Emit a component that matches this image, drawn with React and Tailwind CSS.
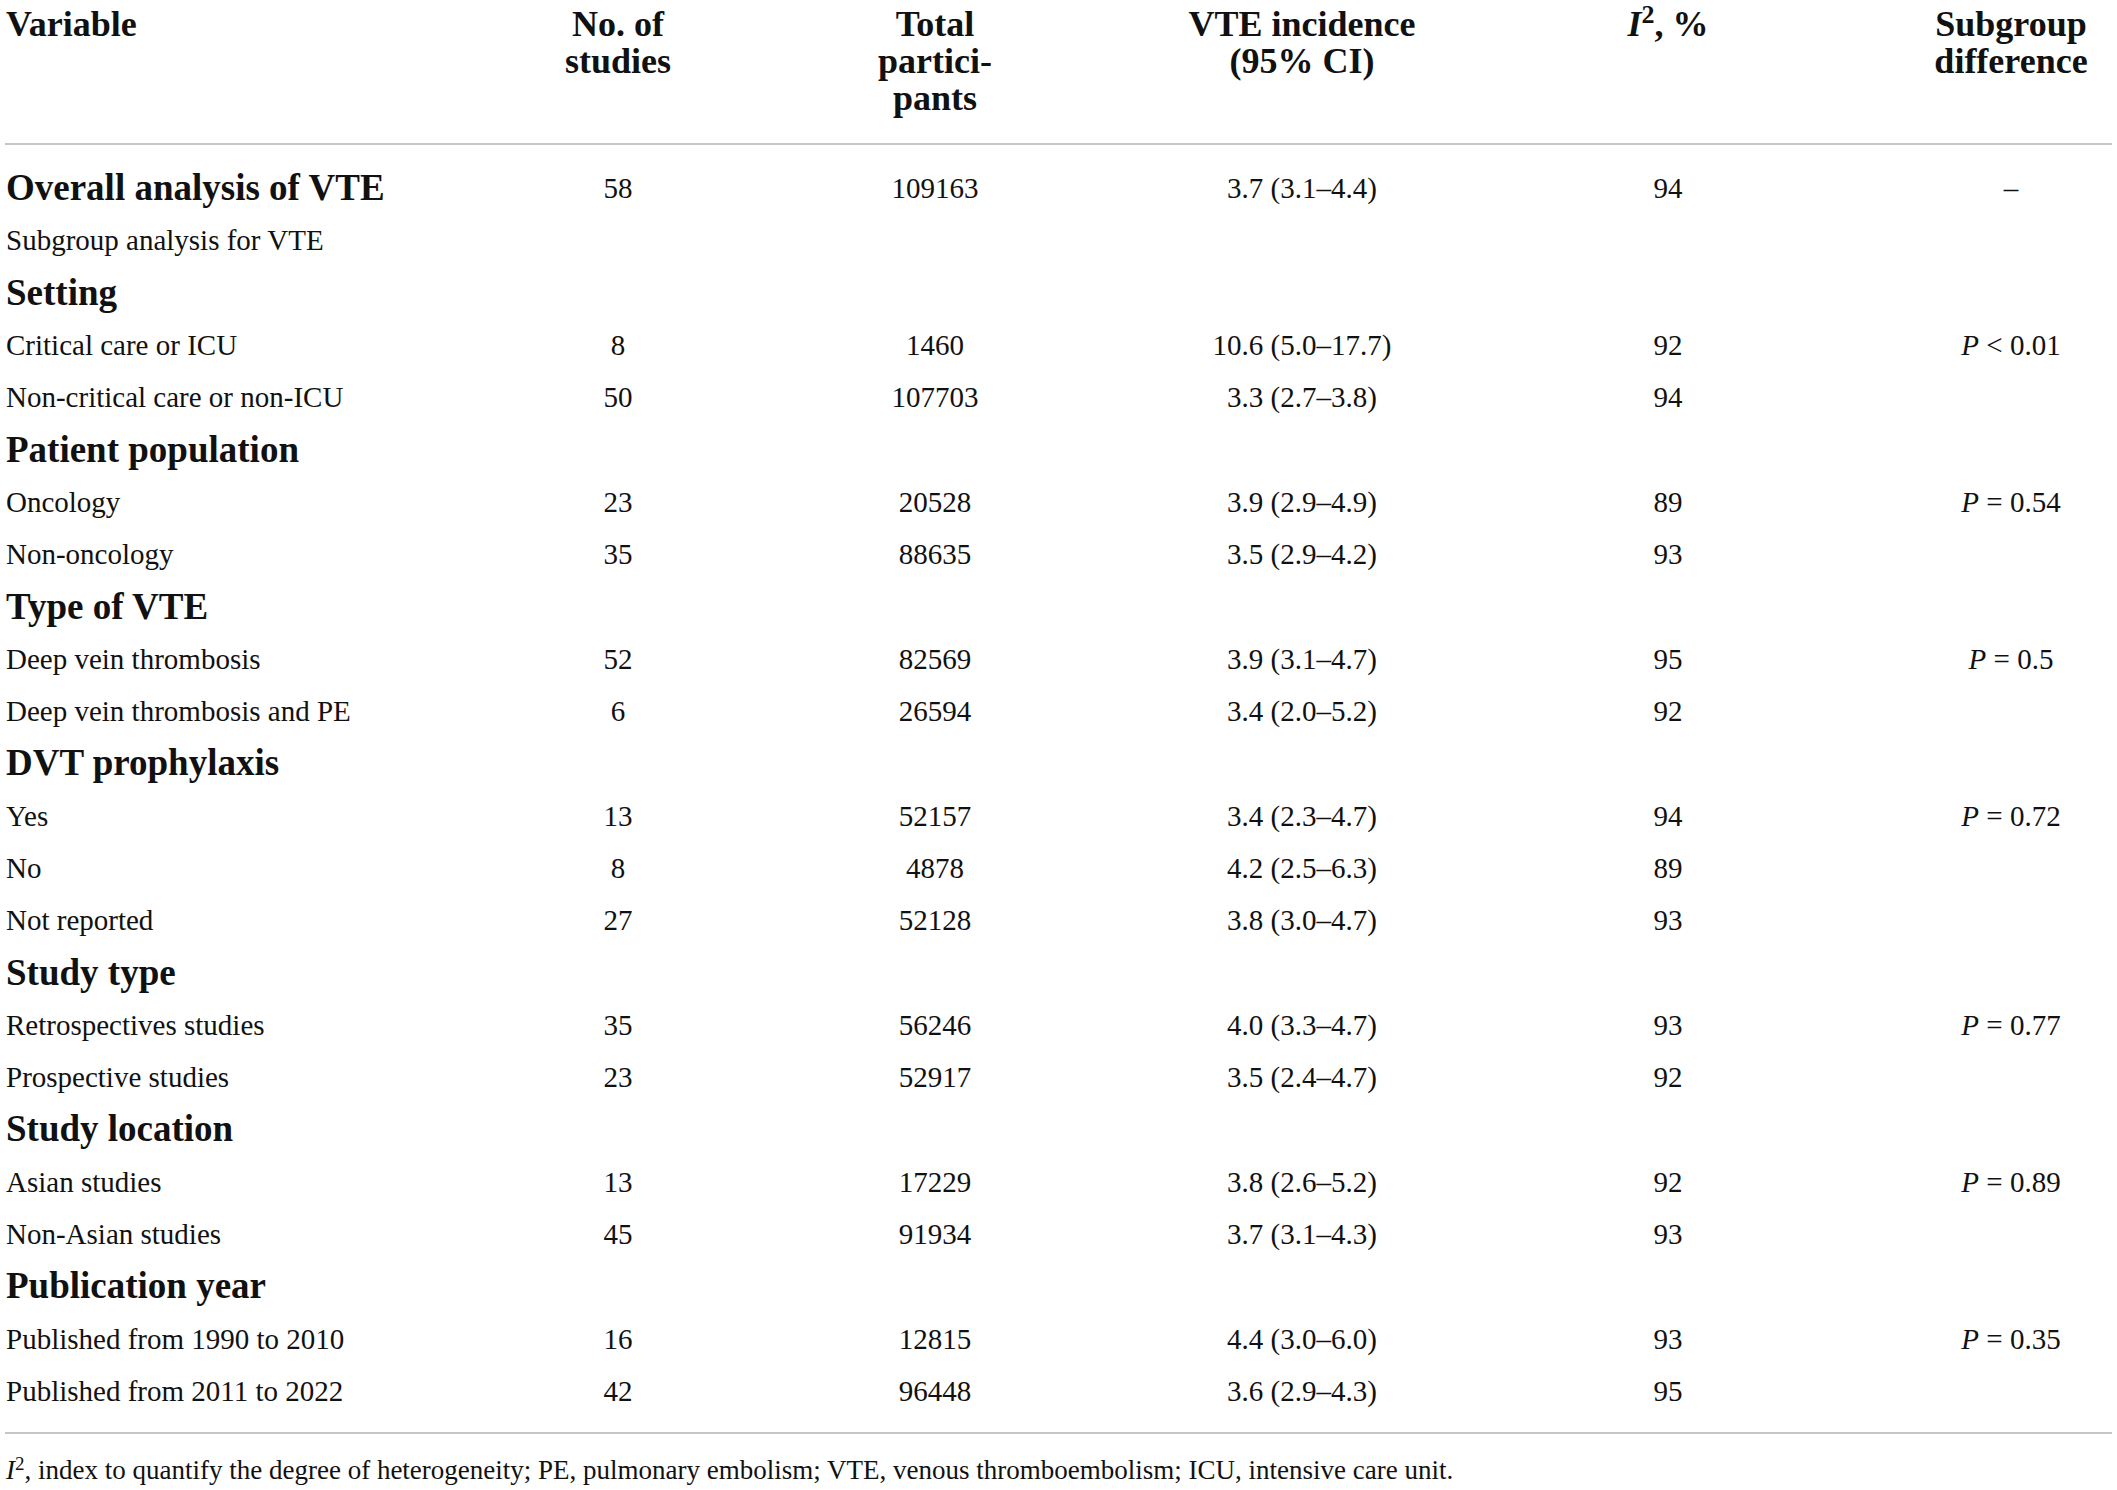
import React from "react";

const rows = [
  { t: "Overall analysis of VTE", b: true, v: ["58", "109163", "3.7 (3.1–4.4)", "94", "–"] },
  { t: "Subgroup analysis for VTE" },
  { t: "Setting", b: true },
  { t: "Critical care or ICU", v: ["8", "1460", "10.6 (5.0–17.7)", "92", ["<", "0.01"]] },
  { t: "Non-critical care or non-ICU", v: ["50", "107703", "3.3 (2.7–3.8)", "94", ""] },
  { t: "Patient population", b: true },
  { t: "Oncology", v: ["23", "20528", "3.9 (2.9–4.9)", "89", ["=", "0.54"]] },
  { t: "Non-oncology", v: ["35", "88635", "3.5 (2.9–4.2)", "93", ""] },
  { t: "Type of VTE", b: true },
  { t: "Deep vein thrombosis", v: ["52", "82569", "3.9 (3.1–4.7)", "95", ["=", "0.5"]] },
  { t: "Deep vein thrombosis and PE", v: ["6", "26594", "3.4 (2.0–5.2)", "92", ""] },
  { t: "DVT prophylaxis", b: true },
  { t: "Yes", v: ["13", "52157", "3.4 (2.3–4.7)", "94", ["=", "0.72"]] },
  { t: "No", v: ["8", "4878", "4.2 (2.5–6.3)", "89", ""] },
  { t: "Not reported", v: ["27", "52128", "3.8 (3.0–4.7)", "93", ""] },
  { t: "Study type", b: true },
  { t: "Retrospectives studies", v: ["35", "56246", "4.0 (3.3–4.7)", "93", ["=", "0.77"]] },
  { t: "Prospective studies", v: ["23", "52917", "3.5 (2.4–4.7)", "92", ""] },
  { t: "Study location", b: true },
  { t: "Asian studies", v: ["13", "17229", "3.8 (2.6–5.2)", "92", ["=", "0.89"]] },
  { t: "Non-Asian studies", v: ["45", "91934", "3.7 (3.1–4.3)", "93", ""] },
  { t: "Publication year", b: true },
  { t: "Published from 1990 to 2010", v: ["16", "12815", "4.4 (3.0–6.0)", "93", ["=", "0.35"]] },
  { t: "Published from 2011 to 2022", v: ["42", "96448", "3.6 (2.9–4.3)", "95", ""] },
];

const grid = "grid grid-cols-[539px_148px_486px_248px_484px_202px]";

function PVal({ v }) {
  if (Array.isArray(v)) {
    return (
      <span>
        <i>P</i> {v[0]} {v[1]}
      </span>
    );
  }
  return <span>{v}</span>;
}

export default function App() {
  return (
    <div
      className="w-[2117px] h-[1490px] bg-white overflow-hidden text-[#111]"
      style={{ fontFamily: '"Liberation Serif", "Times New Roman", serif' }}
    >
      <div className="px-[5px]">
        <div className={`${grid} h-[143px] pt-[6px] items-start font-bold text-[36px] leading-[37px]`}>
          <div className="pl-[1px]">Variable</div>
          <div className="text-center whitespace-nowrap">
            No. of
            <br />
            studies
          </div>
          <div className="text-center whitespace-nowrap">
            Total
            <br />
            partici-
            <br />
            pants
          </div>
          <div className="text-center whitespace-nowrap">
            VTE incidence
            <br />
            (95% CI)
          </div>
          <div className="text-center whitespace-nowrap">
            <i>I</i>
            <sup className="text-[26px]">2</sup>, %
          </div>
          <div className="text-center whitespace-nowrap">
            Subgroup
            <br />
            difference
          </div>
        </div>
        <div className="h-[2px] bg-[#c6c6c6]" />
        <div className="pt-[17px] pb-[15px]">
          {rows.map((r, i) => (
            <div key={i} className={`${grid} h-[52.3px] items-center text-[29px] leading-[32px]`}>
              <div className={`pl-[1px] whitespace-nowrap ${r.b ? "font-bold text-[37px] leading-[40px]" : ""}`}>
                {r.t}
              </div>
              {r.v
                ? r.v.map((c, j) => (
                    <div key={j} className="text-center whitespace-nowrap">
                      {j === 4 ? <PVal v={c} /> : c}
                    </div>
                  ))
                : null}
            </div>
          ))}
        </div>
        <div className="h-[2px] bg-[#c6c6c6]" />
        <div className="pt-[20px] pl-[1px] text-[27px] leading-[32px] whitespace-nowrap">
          <i>I</i>
          <sup className="text-[19px]">2</sup>, index to quantify the degree of heterogeneity; PE, pulmonary embolism; VTE,
          venous thromboembolism; ICU, intensive care unit.
        </div>
      </div>
    </div>
  );
}
